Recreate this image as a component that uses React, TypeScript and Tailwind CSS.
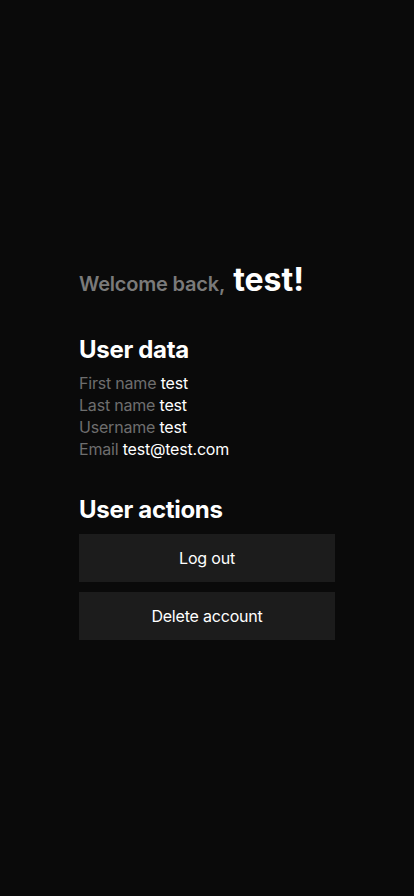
export default function App() {
  return (
    <div className="min-h-screen w-full bg-[#0a0a0a] flex items-center justify-center">
      <div className="w-[256px] flex flex-col font-['Inter',sans-serif]">
        <div className="flex items-baseline gap-2">
          <span className="text-[20px] font-semibold text-[#7a7a7a] tracking-[-0.2px]">Welcome back,</span>
          <span className="text-[32px] font-bold text-white">test!</span>
        </div>
        <h2 className="mt-[30px] text-[24px] font-bold text-white leading-[32px] tracking-[-0.3px]">User data</h2>
        <div className="mt-[6px] flex flex-col text-[16px] leading-[22px] tracking-[-0.2px]">
          <div><span className="text-[#6e6e6e]">First name</span> <span className="text-white">test</span></div>
          <div><span className="text-[#6e6e6e]">Last name</span> <span className="text-white">test</span></div>
          <div><span className="text-[#6e6e6e]">Username</span> <span className="text-white">test</span></div>
          <div><span className="text-[#6e6e6e]">Email</span> <span className="text-white">test@test.com</span></div>
        </div>
        <h2 className="mt-[34px] text-[24px] font-bold text-white leading-[32px] tracking-[-0.3px]">User actions</h2>
        <div className="mt-[8px] flex flex-col gap-[10px]">
          <button className="h-[48px] w-full bg-[#1c1c1c] text-white text-[16px] tracking-[-0.2px]">Log out</button>
          <button className="h-[48px] w-full bg-[#1c1c1c] text-white text-[16px] tracking-[-0.2px]">Delete account</button>
        </div>
      </div>
    </div>
  );
}
